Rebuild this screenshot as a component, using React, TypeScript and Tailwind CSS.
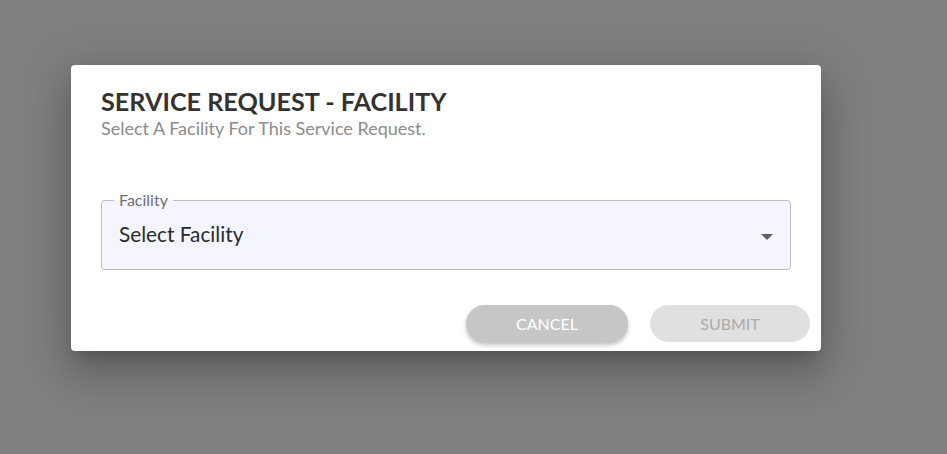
import React from 'react';

export default function App() {
    return (
        <div
            className="w-[947px] h-[454px] bg-[#7f7f7f] relative overflow-hidden"
            style={{ fontFamily: 'Lato, "Open Sans", sans-serif' }}
        >
            <div className="absolute left-[71px] top-[65px] w-[750px] h-[286px] bg-white rounded-[4px] shadow-[0_11px_15px_-7px_rgba(0,0,0,0.2),0_24px_38px_3px_rgba(0,0,0,0.14),0_9px_46px_8px_rgba(0,0,0,0.12)] flex flex-col">
                {/* Header */}
                <div className="pl-[30px] pt-[21px]">
                    <h2 className="text-[25.2px] leading-[31px] font-bold text-[#333333]">SERVICE REQUEST - FACILITY</h2>
                    <p className="text-[18px] leading-[22px] text-[#8c8c8c]">Select A Facility For This Service Request.</p>
                </div>

                {/* Field */}
                <div className="px-[30px] mt-[61px]">
                    <fieldset className="relative h-[77px] -mt-[7px] border border-[#bdbdc4] rounded-[4px] bg-[#f5f5fe] pl-[17px] pr-[14px] flex items-center">
                        <legend className="ml-[-5px] px-[5px] text-[16px] leading-[14px] text-[#707070]">Facility</legend>
                        <span className="flex-1 text-[20.8px] text-[#2b2b2b] -mt-[8px]">Select Facility</span>
                        <svg width="12" height="6" viewBox="0 0 12 6" className="-mt-[3px] mr-[3px]">
                            <path d="M0 0 L12 0 L6 6 Z" fill="#5f5f5f" />
                        </svg>
                    </fieldset>
                </div>

                {/* Actions */}
                <div className="flex justify-end gap-[22px] pr-[11px] mt-[35px]">
                    <button className="w-[162px] h-[37px] rounded-full bg-[#c6c6c6] text-white text-[16px] shadow-[0_3px_4px_rgba(0,0,0,0.25)]">
                        CANCEL
                    </button>
                    <button className="w-[160px] h-[37px] rounded-full bg-[#e0e0e0] text-[#ababab] text-[16px]">
                        SUBMIT
                    </button>
                </div>
            </div>
        </div>
    );
}
